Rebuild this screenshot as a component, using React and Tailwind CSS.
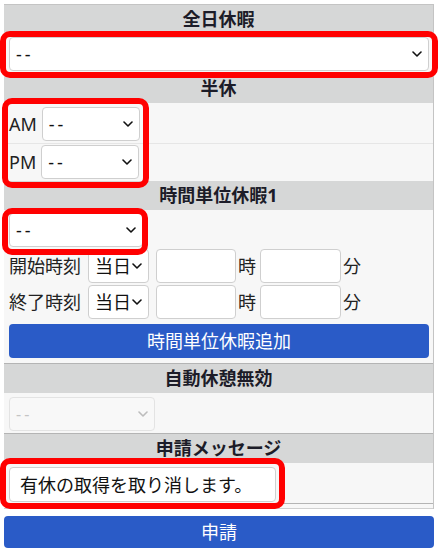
import React from "react";

const Chevron = ({ className }) => (
  <svg
    viewBox="0 0 10 6"
    className={className}
    fill="none"
    stroke="currentColor"
    strokeWidth="1.6"
    strokeLinecap="round"
    strokeLinejoin="round"
  >
    <path d="M1 1l4 4 4-4" />
  </svg>
);

function FakeSelect({ value, className = "", disabled = false }) {
  return (
    <div
      className={`flex items-center justify-between rounded-[4px] border h-[34px] pl-[6px] pr-[6px] ${
        disabled
          ? "border-[#e3e3e3] bg-[#f8f8f8] text-[#c4c4c4]"
          : "border-[#cfcfcf] bg-white text-[#111]"
      } ${className}`}
    >
      <span className={`leading-none ${value === "--" ? "tracking-[3px]" : ""}`}>
        {value}
      </span>
      <Chevron
        className={`w-[10px] h-[6px] ${disabled ? "text-[#bcbcbc]" : "text-[#111]"}`}
      />
    </div>
  );
}

function Header({ children }) {
  return (
    <div className="h-[29px] flex items-center justify-center bg-[#d6d7d7] font-bold text-[#1c1c28]">
      {children}
    </div>
  );
}

function TimeRow({ label }) {
  return (
    <div className="flex items-center h-[34px]">
      <span className="w-[72px] leading-none text-[#222]">{label}</span>
      <FakeSelect
        value="当日"
        className="ml-[7px] w-[61px] pl-[4px] pr-[5px] text-[18px]"
      />
      <div className="ml-[7px] w-[80px] h-[34px] rounded-[4px] border border-[#cfcfcf] bg-white" />
      <span className="ml-[2px] leading-none text-[#222]">時</span>
      <div className="ml-[4px] w-[81px] h-[34px] rounded-[4px] border border-[#cfcfcf] bg-white" />
      <span className="ml-[2px] leading-none text-[#222]">分</span>
    </div>
  );
}

// 赤枠は画面上の注記
function RedBox({ className }) {
  return (
    <div
      className={`absolute pointer-events-none border-[6px] border-[#ff0000] rounded-[10px] ${className}`}
    />
  );
}

export default function App() {
  return (
    <div
      className="relative w-[440px] h-[557px] overflow-hidden bg-white text-[18px] pt-[4px]"
      style={{ fontFamily: '"Noto Sans", "Noto Sans CJK JP", sans-serif' }}
    >
      <div className="ml-[4px] w-[430px] border-t border-r border-[#c4c4c4] bg-[#f7f7f7]">
        {/* 全日休暇 */}
        <Header>全日休暇</Header>
        <div className="pt-[3px] pb-[3px] pl-[5px] pr-[4px]">
          <FakeSelect value="--" className="pl-[6px] pr-[6px]" />
        </div>

        {/* 半休 */}
        <Header>半休</Header>
        <div className="flex items-center gap-[5px] pl-[5px] pt-[4px] pb-[2px] border-b border-[#e6e6e6]">
          <span className="leading-none text-[#222]">AM</span>
          <FakeSelect value="--" className="w-[98px] pr-[6px]" />
        </div>
        <div className="flex items-center gap-[5px] pl-[5px] pt-[1px] pb-[2px]">
          <span className="leading-none text-[#222]">PM</span>
          <FakeSelect value="--" className="w-[98px] pr-[6px]" />
        </div>

        {/* 時間単位休暇1 */}
        <Header>時間単位休暇1</Header>
        <div className="flex flex-col gap-[2px] pl-[5px] pr-[4px] pt-[3px] pb-[5px] border-b border-[#b4b4b4]">
          <FakeSelect value="--" className="w-[134px]" />
          <TimeRow label="開始時刻" />
          <TimeRow label="終了時刻" />
          <button className="mt-[3px] h-[34px] rounded-[4px] bg-[#2a5bc7] text-white text-[18px] leading-none">
            時間単位休暇追加
          </button>
        </div>

        {/* 自動休憩無効 */}
        <Header>自動休憩無効</Header>
        <div className="pl-[5px] pt-[4px] pb-[2px] border-b border-[#b4b4b4]">
          <FakeSelect value="--" disabled className="w-[146px] h-[33px] text-[16px]" />
        </div>

        {/* 申請メッセージ */}
        <Header>申請メッセージ</Header>
        <div className="pl-[5px] pt-[4px] pb-[1px] border-b border-[#b4b4b4]">
          <div className="w-[267px] h-[35px] flex items-center pl-[10px] rounded-[4px] border border-[#cfcfcf] bg-white text-[#111] leading-none">
            有休の取得を取り消します。
          </div>
        </div>
        <div className="h-[5px] border-b border-[#d0d0d0]" />
      </div>

      <button className="mt-[7px] ml-[4px] w-[430px] h-[32px] rounded-[4px] bg-[#2a5bc7] text-white text-[18px] leading-none">
        申請
      </button>

      <RedBox className="left-[0px] top-[31px] w-[438px] h-[47px]" />
      <RedBox className="left-[2px] top-[98px] w-[147px] h-[90px]" />
      <RedBox className="left-[2px] top-[208px] w-[146px] h-[47px]" />
      <RedBox className="left-[0px] top-[458px] w-[285px] h-[51px]" />
    </div>
  );
}
